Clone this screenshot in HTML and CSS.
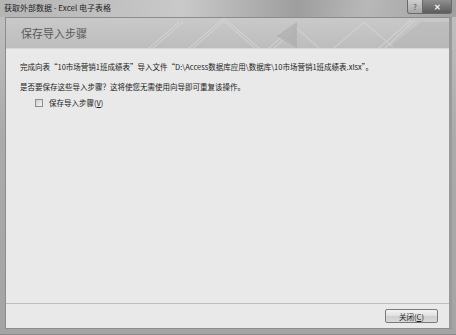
FILE: index.html
```html
<!DOCTYPE html>
<html lang="zh-CN">
<head>
    <meta charset="UTF-8">
    <title>获取外部数据 - Excel 电子表格</title>
    <link rel="stylesheet" href="styles.css">
</head>
<body>
<div class="window">
    <div class="titlebar">
        <span class="title">获取外部数据 - Excel 电子表格</span>
        <div class="caption-buttons">
            <span class="cap-btn help">?</span>
            <span class="cap-btn close">✕</span>
        </div>
    </div>
    <div class="client">
        <div class="header">
            <span class="header-text">保存导入步骤</span>
            <svg class="header-deco" width="300" height="30" viewBox="0 0 300 30">
                <g stroke="#dcdcdc" stroke-width="1" fill="none" opacity="0.8">
                    <path d="M40 30 L75 0 L110 30"/>
                    <path d="M44 30 L75 3 L106 30"/>
                    <path d="M0 30 L30 4"/>
                    <path d="M4 30 L34 4"/>
                    <path d="M120 30 L145 8 L170 30"/>
                    <path d="M125 30 L145 12"/>
                    <path d="M185 30 L215 4 L245 30"/>
                    <path d="M230 30 L262 2"/>
                    <path d="M236 30 L266 2"/>
                </g>
                <path d="M128 18 L148 4 L148 30 Z" fill="#a8a8a8" opacity="0.6"/>
                <path d="M240 30 L272 4 L300 4 L300 30 Z" fill="#b4b4b4" opacity="0.5"/>
            </svg>
        </div>
        <div class="body">
            <p class="line">完成向表“10市场营销1班成绩表”导入文件“D:\Access数据库应用\数据库\10市场营销1班成绩表.xlsx”。</p>
            <p class="line last">是否要保存这些导入步骤？这将使您无需使用向导即可重复该操作。</p>
            <label class="check">
                <span class="box"></span>
                <span>保存导入步骤(<u>V</u>)</span>
            </label>
        </div>
        <div class="footer">
            <button class="btn">关闭(<u>C</u>)</button>
        </div>
    </div>
</div>
</body>
</html>
```

FILE: styles.css
```css
body {
  margin: 0;
  padding: 0;
  font-family: "Noto Sans CJK SC", "Liberation Sans", sans-serif;
  background: #a9a9a9;
}

.window {
  width: 456px;
  height: 335px;
  box-sizing: border-box;
  padding: 0 4px 5px 5px;
  display: flex;
  flex-direction: column;
  background: linear-gradient(to bottom, #c2c2c2, #ababab 40%, #a4a4a4);
  border-bottom: 1px solid #8a8a8a;
  overflow: hidden;
}

.titlebar {
  height: 17px;
  display: flex;
  align-items: flex-start;
  justify-content: space-between;
  background: linear-gradient(100deg, #b4b4b4 0%, #c9c9c9 40%, #9e9e9e 65%, #b8b8b8 80%, #a0a0a0 100%);
  margin: 0 -4px 0 -5px;
  padding: 0 4px 0 4px;
}

.title {
  font-size: 8px;
  line-height: 16px;
  color: #1e1e1e;
}

.caption-buttons {
  display: flex;
}

.cap-btn {
  height: 14px;
  display: flex;
  align-items: center;
  justify-content: center;
  font-size: 8px;
  color: #eee;
  border: 1px solid #6a6a6a;
  border-top: none;
  box-sizing: border-box;
}

.help {
  width: 16px;
  background: linear-gradient(to bottom, #cfcfcf, #a6a6a6);
  border-radius: 0 0 0 3px;
  color: #555;
}

.close {
  width: 29px;
  border-left: none;
  background: linear-gradient(to bottom, #8f8f8f, #5c5c5c);
  border-radius: 0 0 3px 0;
  color: #f4f4f4;
  font-weight: bold;
}

.client {
  flex: 1;
  display: flex;
  flex-direction: column;
  background: #e9e9e9;
  border: 1px solid #8c8c8c;
  border-right: 3px solid #9a9a9a;
}

.header {
  height: 30px;
  position: relative;
  background: linear-gradient(to bottom, #c9c9c9, #bdbdbd);
  border-bottom: 1px solid #d6d6d6;
  display: flex;
  align-items: center;
  padding-left: 15px;
  overflow: hidden;
}

.header-text {
  font-size: 11px;
  color: #595959;
}

.header-deco {
  position: absolute;
  right: 0;
  top: 0;
}

.body {
  flex: 1;
  padding: 13px 14px;
}

.line {
  margin: 0 0 11px 0;
  font-size: 7.5px;
  line-height: 9px;
  color: #1a1a1a;
}

.line.last {
  margin-bottom: 6px;
}

.check {
  display: flex;
  align-items: center;
  gap: 6px;
  margin-left: 15px;
  font-size: 7.5px;
  color: #1a1a1a;
}

.box {
  width: 6px;
  height: 6px;
  border: 1px solid #8e8e8e;
  background: linear-gradient(135deg, #cfcfcf, #f2f2f2);
}

.footer {
  height: 24px;
  border-top: 1px solid #bdbdbd;
  display: flex;
  align-items: center;
  justify-content: flex-end;
  padding-right: 11px;
}

.btn {
  width: 53px;
  height: 14px;
  padding: 0;
  font-family: inherit;
  font-size: 7.5px;
  color: #1a1a1a;
  border: 1px solid #7a7a7a;
  border-radius: 2px;
  background: linear-gradient(to bottom, #f3f3f3, #e0e0e0 50%, #cfcfcf 51%, #d9d9d9);
}
```
